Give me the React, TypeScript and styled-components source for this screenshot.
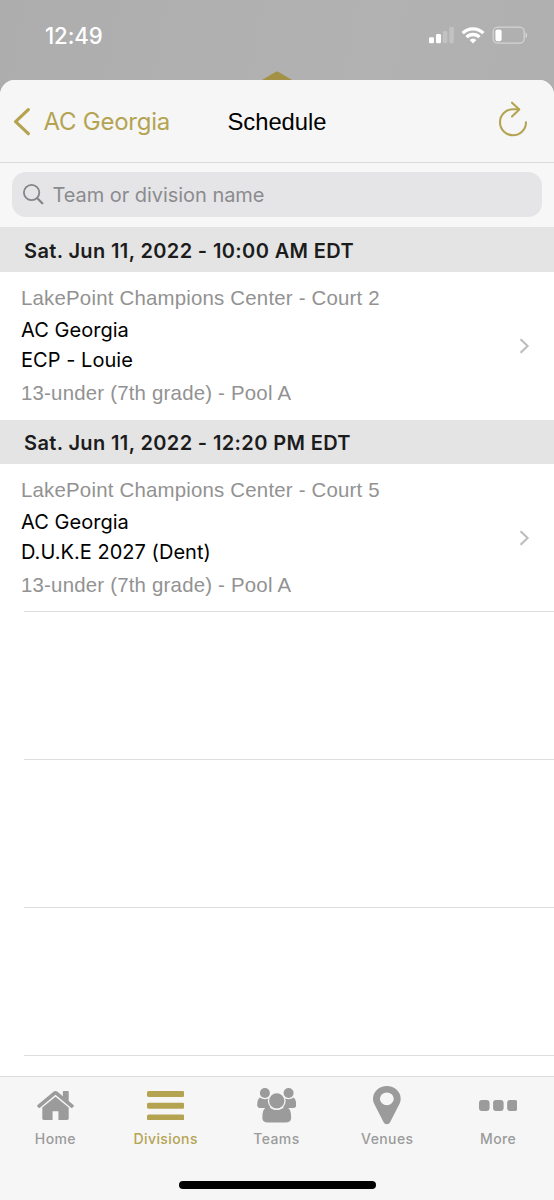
import React from "react";
import styled, { createGlobalStyle } from "styled-components";

const GOLD = "#b4a452";
const SF = `Inter, "Liberation Sans", sans-serif`;
const HELV = `"Liberation Sans", Arial, sans-serif`;

const GlobalStyle = createGlobalStyle`
  * { box-sizing: border-box; }
  body { margin: 0; background: #b0b0b0; font-family: ${SF}; }
`;

const Screen = styled.div`
  position: relative;
  display: flex;
  flex-direction: column;
  width: 554px;
  height: 1200px;
  overflow: hidden;
  background: linear-gradient(100deg, #adadad 0%, #b2b2b2 50%, #adadad 100%);
`;

const StatusBar = styled.header`
  position: relative;
  display: flex;
  justify-content: space-between;
  flex: none;
  height: 80px;
  padding: 22px 27px 0 45px;
`;

const Clock = styled.span`
  color: #fff;
  font-size: 22.2px;
  font-weight: 550;
  line-height: 28px;
  letter-spacing: -0.1px;
`;

const StatusIcons = styled.div`
  display: flex;
  align-items: flex-start;
  padding-top: 3px;
`;

const Peak = styled.svg`
  position: absolute;
  left: 262px;
  top: 71px;
`;

const Sheet = styled.main`
  display: flex;
  flex: 1;
  flex-direction: column;
  min-height: 0;
  background: #fff;
  border-radius: 15px 15px 0 0;
  overflow: hidden;
`;

const NavBar = styled.nav`
  display: grid;
  grid-template-columns: 1fr auto 1fr;
  align-items: center;
  flex: none;
  height: 83px;
  padding: 2px 13px 0;
  background: #f6f6f6;
  border-bottom: 1px solid #dadada;
`;

const BackButton = styled.div`
  display: flex;
  align-items: center;
  gap: 11.5px;
  color: ${GOLD};
  font-size: 24px;
  line-height: 28px;
  letter-spacing: -0.25px;
  white-space: nowrap;
  padding-bottom: 1px;
`;

const Title = styled.h1`
  margin: 0;
  font: 400 23.8px/30px ${HELV};
  color: #000;
`;

const Refresh = styled.svg`
  justify-self: end;
  margin: 0 13px 6px 0;
`;

const SearchArea = styled.div`
  flex: none;
  height: 64px;
  padding: 9px 12px 0;
  background: #f7f7f8;
`;

const SearchField = styled.div`
  display: flex;
  align-items: center;
  gap: 7.5px;
  height: 45px;
  padding-left: 10px;
  border-radius: 14px;
  background: #e5e5e7;
  color: #8b8b8f;
  font-size: 20px;
  letter-spacing: -0.05px;
`;

const SectionHeader = styled.h2<{ $height: number }>`
  flex: none;
  margin: 0;
  height: ${(p) => p.$height}px;
  padding-left: 24px;
  background: #e4e4e4;
  color: #1c1c1c;
  font-size: 20px;
  font-weight: 600;
  letter-spacing: 0.37px;
  line-height: ${(p) => p.$height + 3}px;
`;

const Game = styled.article`
  display: flex;
  align-items: center;
  justify-content: space-between;
  flex: none;
  height: 148px;
  padding: 0 24px 0 21px;
`;

const GameInfo = styled.div`
  display: flex;
  flex-direction: column;
  padding-bottom: 2px;
`;

const Detail = styled.span`
  color: #929292;
  font: 400 20.4px/30px ${HELV};
  letter-spacing: 0.21px;
`;

const Matchup = styled.div`
  display: flex;
  flex-direction: column;
  margin: 2px 0 3px;
`;

const Team = styled.span`
  color: #000;
  font-size: 20px;
  line-height: 30px;
  letter-spacing: 0.04px;
`;

const EmptyRow = styled.div<{ $first?: boolean }>`
  flex: none;
  height: 148px;
  margin-left: 24px;
  margin-top: ${(p) => (p.$first ? "-1px" : "0")};
  border-top: 1px solid #dedede;
`;

const Rows = styled.section`
  flex: 1;
  min-height: 0;
  overflow: hidden;
  display: flex;
  flex-direction: column;
`;

const TabBar = styled.footer`
  position: relative;
  display: grid;
  grid-template-columns: repeat(5, 1fr);
  flex: none;
  height: 124px;
  background: #f6f6f6;
  border-top: 1px solid #dcdcdc;
`;

const Tab = styled.div<{ $active?: boolean }>`
  display: flex;
  flex-direction: column;
  align-items: center;
  padding-right: 1px;
  color: ${(p) => (p.$active ? GOLD : "#9b9b9b")};
  font-size: 14px;
  font-weight: 500;
  line-height: 18px;
  letter-spacing: 0.4px;

  &:first-child {
    padding-right: 0;
  }
`;

const TabIcon = styled.div`
  display: flex;
  align-items: center;
  justify-content: center;
  height: 53px;
  padding-top: 4px;
`;

const HomeIndicator = styled.div`
  position: absolute;
  left: 178.5px;
  top: 104px;
  width: 197.5px;
  height: 8px;
  border-radius: 4px;
  background: #000;
`;

const dot = "v192q0 40-28 68t-68 28h-192q-40 0-68-28t-28-68v-192q0-40 28-68t68-28h192q40 0 68 28t28 68z";
const bar = "v128q0 26-19 45t-45 19h-1408q-26 0-45-19t-19-45v-128q0-26 19-45t45-19h1408q26 0 45 19t19 45z";

type Glyph = { box: string; w: number; h: number; art: React.ReactNode };

const glyphs: Record<string, Glyph> = {
  Home: {
    box: "89 253 1614 1283",
    w: 37,
    h: 29,
    art: (
      <path d="M1472 992v480q0 26-19 45t-45 19h-384v-384h-256v384h-384q-26 0-45-19t-19-45v-480q0-1 .5-3t.5-3l575-474 575 474q1 2 1 6zm223-69l-62 74q-8 9-21 11h-3q-13 0-21-7l-692-577-692 577q-12 8-24 7-13-2-21-11l-62-74q-8-10-7-23.5t11-21.5l719-599q32-26 76-26t76 26l244 204v-195q0-14 9-23t23-9h192q14 0 23 9t9 23v408l219 182q10 8 11 21.5t-7 23.5z" />
    ),
  },
  Divisions: {
    box: "128 256 1536 1280",
    w: 37.5,
    h: 29.5,
    art: <path d={`M1664 1344${bar}M1664 832${bar}M1664 320${bar}`} />,
  },
  Teams: {
    box: "0 0 39.5 34.5",
    w: 39.5,
    h: 34.5,
    art: (
      <>
        <path d="M2.9 9.6Q5 11.3 7.9 11.3T13 9.6L15 11v7.5l-2.6 1.6H4Q.2 20.1.2 17 .2 11.500 2.900 9.600z" />
        <path d="M36.600 9.600Q34.500 11.300 31.600 11.300T26.500 9.600L24.500 11v7.500l2.600 1.600H35.500Q39.300 20.100 39.300 17 39.300 11.500 36.600 9.600z" />
        <path d="M11.200 18.500Q15 21.900 19.750 21.900T28.300 18.500Q34.200 19.500 34.200 29.500 34.200 34.500 28.600 34.500H10.900Q5.300 34.500 5.300 29.500 5.300 19.500 11.200 18.500z" />
        <circle cx="7.9" cy="5" r="5" />
        <circle cx="31.600" cy="5" r="5" />
        <circle cx="19.750" cy="12.800" r="8.300" stroke="#f6f6f6" strokeWidth="1.300" />
      </>
    ),
  },
  Venues: {
    box: "384 128 1024 1536",
    w: 27.7,
    h: 38.3,
    art: (
      <path d="M1152 640q0-106-75-181t-181-75-181 75-75 181 75 181 181 75 181-75 75-181zm256 0q0 109-33 179l-364 774q-16 33-47.5 52t-67.5 19-67.5-19-46.5-52l-365-774q-33-70-33-179 0-212 150-362t362-150 362 150 150 362z" />
    ),
  },
  More: {
    box: "192 640 1408 384",
    w: 38.7,
    h: 11,
    art: <path d={`M576 736${dot}M1088 736${dot}M1600 736${dot}`} />,
  },
};

const TabGlyph = ({ name }: { name: string }) => {
  const g = glyphs[name];
  return (
    <svg width={g.w} height={g.h} viewBox={g.box} preserveAspectRatio="none" fill="currentColor">
      {g.art}
    </svg>
  );
};

const games = [
  {
    time: "Sat. Jun 11, 2022 - 10:00 AM EDT",
    venue: "LakePoint Champions Center - Court 2",
    teams: ["AC Georgia", "ECP - Louie"],
    pool: "13-under (7th grade) - Pool A",
    bar: 45,
  },
  {
    time: "Sat. Jun 11, 2022 - 12:20 PM EDT",
    venue: "LakePoint Champions Center - Court 5",
    teams: ["AC Georgia", "D.U.K.E 2027 (Dent)"],
    pool: "13-under (7th grade) - Pool A",
    bar: 44,
  },
];

export default function App() {
  return (
    <>
      <GlobalStyle />
      <Screen>
        <StatusBar>
          <Clock>12:49</Clock>
          <StatusIcons>
            <svg width="100" height="20" viewBox="0 0 100 20" fill="#fff">
              <rect x="2" y="12.2" width="5" height="6" rx="1.3" />
              <rect x="9" y="9" width="5" height="9.2" rx="1.3" />
              <rect x="15.8" y="6" width="4.6" height="12.2" rx="1.3" opacity="0.22" />
              <rect x="22.3" y="2" width="4.6" height="16.2" rx="1.3" opacity="0.22" />
              <g fill="none" stroke="#fff" strokeWidth="3.3">
                <path d="M35.6 8.1a14.8 14.8 0 0 1 20.8 0" />
                <path d="M39.5 12.2a9.2 9.2 0 0 1 13 0" />
              </g>
              <path d="M42.6 15.1a5 5 0 0 1 6.8 0L46 18.6z" />
              <rect x="66.2" y="2.2" width="31" height="16" rx="4.6" fill="none" stroke="#fff" strokeOpacity="0.45" strokeWidth="1.3" />
              <rect x="68.4" y="4.4" width="6.2" height="11.8" rx="2.2" />
              <path d="M98.6 7.6q1.6 1 1.6 2.7t-1.6 2.7z" opacity="0.5" />
            </svg>
          </StatusIcons>
          <Peak width="30" height="9" viewBox="0 0 30 9">
            <path d="M0 9 13.4 1q1.6-.9 3.2 0L30 9z" fill="#a39145" />
          </Peak>
        </StatusBar>
        <Sheet>
          <NavBar>
            <BackButton>
              <svg width="19" height="28" viewBox="0 0 19 28" fill="none" stroke={GOLD} strokeWidth="3.2" strokeLinecap="round" strokeLinejoin="round">
                <path d="M15.3 1.7 2.6 13.700l12.7 12" />
              </svg>
              AC Georgia
            </BackButton>
            <Title>Schedule</Title>
            <Refresh width="30" height="36" viewBox="0 0 30 36" fill="none" stroke={GOLD} strokeWidth="2.1" strokeLinecap="round" strokeLinejoin="round">
              <path d="M28 21.2A13 13 0 1 1 15 8.2h6" />
              <path d="M14 1.7 21.3 8.4 14 15.6" />
            </Refresh>
          </NavBar>
          <SearchArea>
            <SearchField>
              <svg width="23" height="23" viewBox="0 0 23 23" fill="none" stroke="#858589" strokeLinecap="round">
                <circle cx="9.6" cy="9.5" r="7.7" strokeWidth="1.8" />
                <path d="m15.3 15.3 5 5" strokeWidth="2.3" />
              </svg>
              Team or division name
            </SearchField>
          </SearchArea>
          <Rows>
            {games.map((game) => (
              <React.Fragment key={game.time}>
                <SectionHeader $height={game.bar}>{game.time}</SectionHeader>
                <Game>
                  <GameInfo>
                    <Detail>{game.venue}</Detail>
                    <Matchup>
                      {game.teams.map((team) => (
                        <Team key={team}>{team}</Team>
                      ))}
                    </Matchup>
                    <Detail>{game.pool}</Detail>
                  </GameInfo>
                  <svg width="11" height="16" viewBox="0 0 11 16" fill="none" stroke="#bdbdbf" strokeWidth="2.1">
                    <path d="M1.6 1.2 8.6 8l-7 6.8" />
                  </svg>
                </Game>
              </React.Fragment>
            ))}
            <EmptyRow $first />
            <EmptyRow />
            <EmptyRow />
            <EmptyRow />
          </Rows>
          <TabBar>
            {Object.keys(glyphs).map((name) => (
              <Tab key={name} $active={name === "Divisions"}>
                <TabIcon>
                  <TabGlyph name={name} />
                </TabIcon>
                {name}
              </Tab>
            ))}
            <HomeIndicator />
          </TabBar>
        </Sheet>
      </Screen>
    </>
  );
}
